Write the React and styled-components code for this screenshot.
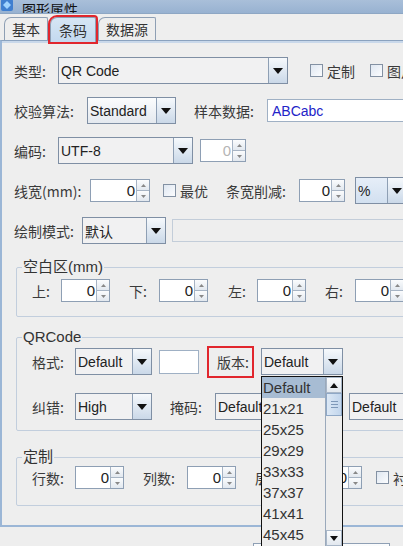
import styled, { createGlobalStyle } from 'styled-components';

const GlobalStyle = createGlobalStyle`
  html, body {
    margin: 0;
    padding: 0;
    overflow: hidden;
    background: #eeeeee;
  }
  * {
    box-sizing: border-box;
  }
`;

const CJK = `"Noto Sans CJK SC", "Liberation Sans", sans-serif`;
const LATIN = `"Liberation Sans", Arial, "Noto Sans CJK SC", sans-serif`;

const versions = ['Default', '21x21', '25x25', '29x29', '33x33', '37x37', '41x41', '45x45', '49x49'];

const Triangle = ({ up, size = 5 }) => (
  <svg width={size * 2} height={size + 1} viewBox="0 0 10 6">
    {up ? <path d="M0 6 L5 0 L10 6 Z" fill="#111" /> : <path d="M0 0 L10 0 L5 6 Z" fill="#111" />}
  </svg>
);

const TinyArrow = ({ up }) => (
  <svg width="5" height="3" viewBox="0 0 5 3">
    {up ? <path d="M0 3 L2.5 0 L5 3 Z" fill="#888" /> : <path d="M0 0 L5 0 L2.5 3 Z" fill="#888" />}
  </svg>
);

const Combo = ({ value, width, tone }) => (
  <ComboBox $w={width} $tone={tone}>
    <ComboValue>{value}</ComboValue>
    <ComboButton>
      <Triangle />
    </ComboButton>
  </ComboBox>
);

const Spinner = ({ width, disabled }) => (
  <SpinBox $w={width}>
    <SpinValue $disabled={disabled}>0</SpinValue>
    <SpinButtons>
      <SpinButton>
        <TinyArrow up />
      </SpinButton>
      <SpinButton>
        <TinyArrow />
      </SpinButton>
    </SpinButtons>
  </SpinBox>
);

const Check = ({ label }) => (
  <CheckWrap>
    <CheckMark />
    <CheckText>{label}</CheckText>
  </CheckWrap>
);

export default function App() {
  return (
    <Window>
      <GlobalStyle />
      <TitleBar>
        <svg width="14" height="14" viewBox="0 0 14 14">
          <rect x="1" y="0" width="12" height="12" rx="2" fill="#3f7fd0" />
          <path d="M3 6 L7 2 L11 6 L7 10 Z" fill="#9fd3ff" />
        </svg>
        <TitleText>图形属性</TitleText>
      </TitleBar>

      <TabStrip>
        <Tab>基本</Tab>
        <Tab $active>条码</Tab>
        <Tab>数据源</Tab>
      </TabStrip>

      <Panel>
        <Row>
          <Label $w={44}>类型:</Label>
          <Combo value="QR Code" width={230} />
          <Spacer $w={22} />
          <Check label="定制" />
          <Spacer $w={15} />
          <Check label="图片" />
        </Row>

        <Row>
          <Label $w={73}>校验算法:</Label>
          <Combo value="Standard" width={89} tone="light" />
          <Spacer $w={18} />
          <Label $w={73}>样本数据:</Label>
          <TextField $w={150} $h={23} $blue>ABCabc</TextField>
        </Row>

        <Row>
          <Label $w={44}>编码:</Label>
          <Combo value="UTF-8" width={135} />
          <Spacer $w={7} />
          <Spinner width={46} disabled />
        </Row>

        <Row>
          <Label $w={76}>线宽(mm):</Label>
          <Spinner width={60} />
          <Spacer $w={13} />
          <Check label="最优" />
          <Spacer $w={18} />
          <Label $w={73}>条宽削减:</Label>
          <Spinner width={46} />
          <Spacer $w={10} />
          <Combo value="%" width={52} tone="blue" />
        </Row>

        <Row>
          <Label $w={68}>绘制模式:</Label>
          <Combo value="默认" width={84} />
          <Spacer $w={6} />
          <TextField $w={260} $h={23} $disabled />
        </Row>

        <Group $top={14}>
          <GroupTitle>空白区(mm)</GroupTitle>
          <GroupRow $top={3}>
            <Label $w={29}>上:</Label>
            <Spinner width={49} />
            <Spacer $w={19} />
            <Label $w={30}>下:</Label>
            <Spinner width={49} />
            <Spacer $w={20} />
            <Label $w={29}>左:</Label>
            <Spinner width={49} />
            <Spacer $w={19} />
            <Label $w={30}>右:</Label>
            <Spinner width={49} />
          </GroupRow>
          <GroupEnd $h={14} />
        </Group>

        <Group $top={11}>
          <GroupTitle>QRCode</GroupTitle>
          <GroupRow $top={2} $h={27}>
            <Label $w={43}>格式:</Label>
            <Combo value="Default" width={77} />
            <Spacer $w={7} />
            <TextField $w={40} $h={24} />
            <Spacer $w={8} />
            <Highlight>版本:</Highlight>
            <Spacer $w={7} />
            <ListAnchor>
              <Combo value="Default" width={82} />
              <DropList>
                {versions.map((v, i) => (
                  <DropItem key={v} $active={i === 0}>
                    {v}
                  </DropItem>
                ))}
                <ScrollBar>
                  <ScrollButton>
                    <Triangle up size={4} />
                  </ScrollButton>
                  <ScrollThumb>
                    <Grip />
                    <Grip />
                    <Grip />
                  </ScrollThumb>
                  <ScrollTrack />
                  <ScrollButton>
                    <Triangle size={4} />
                  </ScrollButton>
                </ScrollBar>
              </DropList>
            </ListAnchor>
          </GroupRow>
          <GroupRow $top={18} $h={27}>
            <Label $w={43}>纠错:</Label>
            <Combo value="High" width={77} />
            <Spacer $w={18} />
            <Label $w={45}>掩码:</Label>
            <Combo value="Default" width={120} />
            <Spacer $w={14} />
            <Combo value="Default" width={80} />
          </GroupRow>
          <GroupEnd $h={10} />
        </Group>

        <Group $top={17}>
          <GroupTitle>定制</GroupTitle>
          <GroupRow $top={0}>
            <Label $w={43}>行数:</Label>
            <Spinner width={49} />
            <Spacer $w={19} />
            <Label $w={44}>列数:</Label>
            <Spinner width={49} />
            <Spacer $w={19} />
            <Label $w={43}>层数:</Label>
            <Spinner width={64} />
            <Spacer $w={14} />
            <Check label="衬底" />
          </GroupRow>
          <GroupEnd $h={16} />
        </Group>
      </Panel>

      <Footer>
        <FooterButton />
      </Footer>
    </Window>
  );
}

const Window = styled.div`
  width: 403px;
  height: 546px;
  overflow: hidden;
  background: #eeeeee;
  font-family: ${CJK};
  color: #333;
`;

const TitleBar = styled.div`
  height: 14px;
  overflow: hidden;
  display: flex;
  align-items: flex-end;
  gap: 8px;
  background: linear-gradient(#a9bfd9, #98b2d1);
  border-bottom: 1px solid #8ea7c4;
`;

const TitleText = styled.span`
  font-size: 14px;
  line-height: 14px;
  margin-bottom: -3px;
  color: #111;
`;

const TabStrip = styled.div`
  height: 26px;
  display: flex;
  align-items: flex-end;
  padding-left: 4px;
  gap: 2px;
`;

const Tab = styled.div`
  height: ${(p) => (p.$active ? '25px' : '23px')};
  padding: 0 ${(p) => (p.$active ? '8px' : '7px')};
  display: flex;
  align-items: center;
  font-size: 14px;
  color: #333;
  border: 1px solid #8e9fb4;
  border-bottom: none;
  border-radius: 7px 2px 0 0;
  background: ${(p) => (p.$active ? 'linear-gradient(#d6e6f5, #c3d9ef)' : '#eeeeee')};
  outline: ${(p) => (p.$active ? '2px solid #e1262d' : 'none')};
  margin-bottom: ${(p) => (p.$active ? '-2px' : '0')};
  position: relative;
  z-index: ${(p) => (p.$active ? 1 : 0)};
`;

const Panel = styled.div`
  width: 460px;
  height: 487px;
  border-top: 1px solid #8aa2bf;
  border-left: 2px solid #9bb6d6;
  border-bottom: 2px solid #9bb6d6;
  box-shadow: inset 0 2px 0 #c9d8ea;
  padding: 16px 0 0 12px;
`;

const Row = styled.div`
  height: 27px;
  display: flex;
  align-items: center;
  margin-bottom: 13px;
`;

const Spacer = styled.div`
  width: ${(p) => p.$w}px;
  flex: none;
`;

const Label = styled.div`
  width: ${(p) => p.$w}px;
  flex: none;
  font-size: 14px;
  color: #3a3a3a;
  white-space: nowrap;
`;

const comboFill = {
  light: 'linear-gradient(#fbfcfd, #e4e9ef)',
  blue: 'linear-gradient(#e6eef8, #d2e0f0)',
};

const ComboBox = styled.div`
  width: ${(p) => p.$w}px;
  height: 27px;
  flex: none;
  display: flex;
  border: 1px solid #7f8fa4;
  background: ${(p) => comboFill[p.$tone] || '#f1f1f2'};
`;

const ComboValue = styled.div`
  flex: 1;
  min-width: 0;
  display: flex;
  align-items: center;
  padding-left: 2px;
  font-family: ${LATIN};
  font-size: 14px;
  color: #222;
  white-space: nowrap;
  overflow: hidden;
`;

const ComboButton = styled.div`
  width: 19px;
  flex: none;
  display: flex;
  align-items: center;
  justify-content: center;
  border-left: 1px solid #8e9fb4;
  background: linear-gradient(#f6f9fc, #cad8e8);
`;

const SpinBox = styled.div`
  width: ${(p) => p.$w}px;
  height: 23px;
  flex: none;
  display: flex;
  border: 1px solid #8e9fb4;
  background: #fff;
`;

const SpinValue = styled.div`
  flex: 1;
  display: flex;
  align-items: center;
  justify-content: flex-end;
  padding-right: 1px;
  font-family: ${LATIN};
  font-size: 15px;
  color: ${(p) => (p.$disabled ? '#b5b5b5' : '#222')};
`;

const SpinButtons = styled.div`
  width: 13px;
  flex: none;
  display: flex;
  flex-direction: column;
  border-left: 1px solid #a7b4c4;
`;

const SpinButton = styled.div`
  flex: 1;
  display: flex;
  align-items: center;
  justify-content: center;
  background: linear-gradient(#fbfcfd, #e2e8ef);
  & + & {
    border-top: 1px solid #a7b4c4;
  }
`;

const TextField = styled.div`
  width: ${(p) => p.$w}px;
  height: ${(p) => p.$h}px;
  flex: none;
  display: flex;
  align-items: center;
  padding-left: 4px;
  border: 1px solid ${(p) => (p.$disabled ? '#c3cdd9' : '#9fb0c4')};
  background: ${(p) => (p.$disabled ? '#eeeeee' : '#fff')};
  font-family: ${LATIN};
  font-size: 14px;
  color: ${(p) => (p.$blue ? '#2323c8' : '#222')};
`;

const CheckWrap = styled.div`
  display: flex;
  align-items: center;
  gap: 4px;
  flex: none;
`;

const CheckMark = styled.div`
  width: 13px;
  height: 13px;
  border: 1px solid #8391a3;
  background: linear-gradient(135deg, #dfe7f1, #fbfcfe);
`;

const CheckText = styled.span`
  font-size: 14px;
  color: #3a3a3a;
  white-space: nowrap;
`;

const Group = styled.fieldset`
  margin: ${(p) => p.$top}px 0 0 2px;
  padding: 0 0 0 15px;
  width: 440px;
  border: 1px solid #c2cedd;
  border-radius: 2px;
  min-width: 0;
`;

const GroupTitle = styled.legend`
  padding: 0 1px;
  margin-left: -10px;
  font-family: ${LATIN};
  font-size: 15px;
  line-height: 18px;
  color: #333;
`;

const GroupRow = styled.div`
  height: ${(p) => p.$h || 23}px;
  display: flex;
  align-items: center;
  margin-top: ${(p) => p.$top}px;
`;

const GroupEnd = styled.div`
  height: ${(p) => p.$h}px;
`;

const Highlight = styled.div`
  width: 47px;
  height: 32px;
  flex: none;
  display: flex;
  align-items: center;
  padding-left: 8px;
  border: 2px solid #e1262d;
  font-size: 14px;
  color: #3a3a3a;
`;

const ListAnchor = styled.div`
  position: relative;
  flex: none;
`;

const DropList = styled.div`
  position: absolute;
  top: 100%;
  left: 0;
  width: 82px;
  height: 186px;
  margin-top: 1px;
  padding-right: 17px;
  border: 1px solid #111;
  background: #eeeeee;
  z-index: 5;
`;

const DropItem = styled.div`
  height: 21px;
  display: flex;
  align-items: center;
  padding-left: 1px;
  font-family: ${LATIN};
  font-size: 15px;
  color: #333;
  background: ${(p) => (p.$active ? '#a7bcd3' : 'transparent')};
`;

const ScrollBar = styled.div`
  position: absolute;
  top: 0;
  right: 0;
  width: 17px;
  height: 169px;
  display: flex;
  flex-direction: column;
  border-left: 1px solid #9aa9bb;
`;

const ScrollButton = styled.div`
  height: 16px;
  display: flex;
  align-items: center;
  justify-content: center;
  background: linear-gradient(#fbfcfd, #e2e8ef);
  border: 1px solid #a9b7c8;
`;

const ScrollThumb = styled.div`
  height: 23px;
  display: flex;
  flex-direction: column;
  align-items: center;
  justify-content: center;
  gap: 2px;
  border: 1px solid #8fa8c6;
  background: linear-gradient(90deg, #dce8f5, #c1d5ec);
`;

const Grip = styled.div`
  width: 7px;
  height: 1px;
  background: #7e98b8;
`;

const ScrollTrack = styled.div`
  flex: 1;
  background: #eeeeee;
`;

const Footer = styled.div`
  display: flex;
  padding: 16px 0 0 253px;
`;

const FooterButton = styled.div`
  width: 137px;
  height: 26px;
  border: 1px solid #8e9fb4;
  background: linear-gradient(#fbfcfd, #e2e8ef);
`;
